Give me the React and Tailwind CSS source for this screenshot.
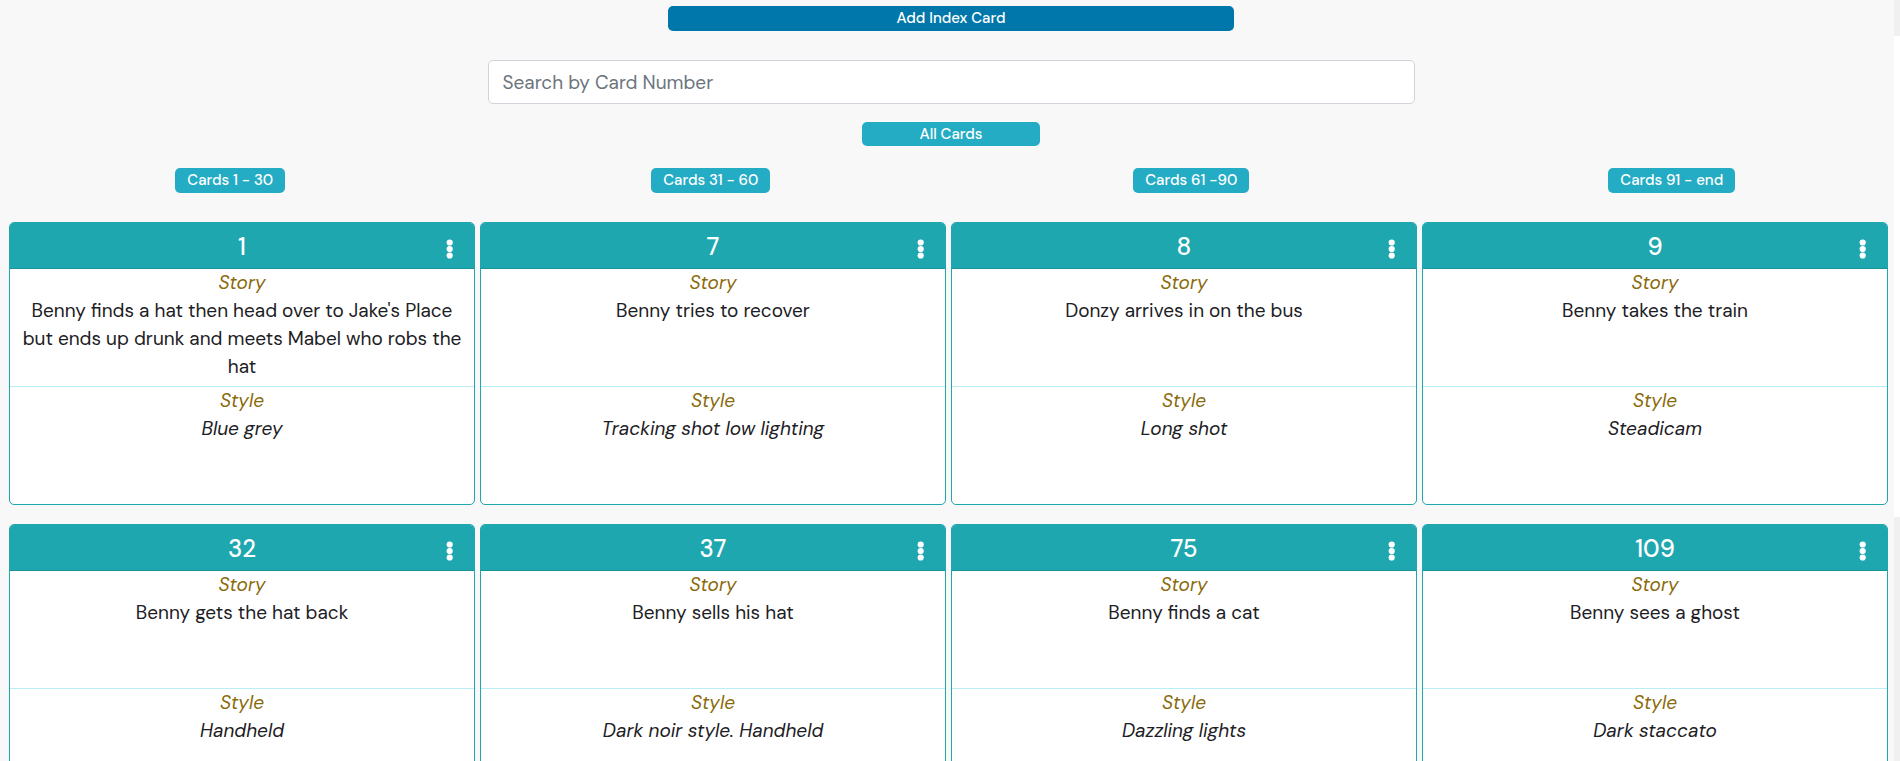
import React from "react";

const ranges = ["Cards 1 - 30", "Cards 31 - 60", "Cards 61 -90", "Cards 91 - end"];

const cards = [
  {
    number: 1,
    story: "Benny finds a hat then head over to Jake's Place but ends up drunk and meets Mabel who robs the hat",
    style: "Blue grey",
  },
  { number: 7, story: "Benny tries to recover", style: "Tracking shot low lighting" },
  { number: 8, story: "Donzy arrives in on the bus", style: "Long shot" },
  { number: 9, story: "Benny takes the train", style: "Steadicam" },
  { number: 32, story: "Benny gets the hat back", style: "Handheld" },
  { number: 37, story: "Benny sells his hat", style: "Dark noir style. Handheld" },
  { number: 75, story: "Benny finds a cat", style: "Dazzling lights" },
  { number: 109, story: "Benny sees a ghost", style: "Dark staccato" },
];

function DotsIcon() {
  return (
    <svg width="8" height="20" viewBox="0 0 8 20" fill="currentColor" aria-hidden="true">
      <circle cx="3.7" cy="3.5" r="3.1" />
      <circle cx="3.7" cy="10" r="3.1" />
      <circle cx="3.7" cy="16.5" r="3.1" />
    </svg>
  );
}

function IndexCard({ number, story, style }) {
  return (
    <article className="overflow-hidden rounded-[5px] border border-[#1fa7b0] bg-white text-center text-[19px] leading-7">
      <header className="grid h-[46px] grid-cols-[1fr_auto_1fr] items-center border-b border-[#1a929a] bg-[#1fa7b0] text-white">
        <h2 className="col-start-2 pt-0.5 text-2xl leading-7 font-medium">{number}</h2>
        <button type="button" aria-label={`Options for card ${number}`} className="mt-1.5 mr-5 justify-self-end">
          <DotsIcon />
        </button>
      </header>
      <section className="h-[118px] border-b border-[#b9eff4] px-2">
        <h3 className="text-[#8a6a0a] italic">Story</h3>
        <p>{story}</p>
      </section>
      <section className="h-[117px] px-2 italic">
        <h3 className="text-[#8a6a0a]">Style</h3>
        <p>{style}</p>
      </section>
    </article>
  );
}

export default function App() {
  return (
    <div className="flex h-screen overflow-hidden bg-[#f8f8f8] font-['DM_Sans',Lato,sans-serif] text-[#1c2024]">
      <main className="min-w-0 flex-1">
        <div className="flex flex-col items-center pt-1.5 pl-2">
          <button type="button" className="h-[25px] w-[30%] rounded-[5px] bg-[#0077aa] pb-px text-[15px] leading-6 font-medium text-white">
            Add Index Card
          </button>
          <div className="mt-[29px] flex w-1/2 px-2">
            <input
              type="text"
              aria-label="Search by Card Number"
              placeholder="Search by Card Number"
              className="h-11 w-full rounded-[5px] border border-[#ced4da] bg-white px-3.5 text-[19px] placeholder:text-[#6c757d]"
            />
          </div>
          <button type="button" className="mt-[18px] h-6 w-[178px] rounded-[5px] bg-[#24acc4] text-[15px] leading-6 font-medium text-white">
            All Cards
          </button>
        </div>
        <nav className="mt-[22px] grid grid-cols-4 gap-9 pl-2">
          {ranges.map((label) => (
            <button
              key={label}
              type="button"
              className="h-[25px] justify-self-center rounded-[5px] bg-[#24acc4] px-3 pb-px text-[15px] leading-6 font-medium text-white"
            >
              {label}
            </button>
          ))}
        </nav>
        <div className="mt-[29px] grid grid-cols-4 gap-x-[5px] gap-y-[19px] pr-1.5 pl-[9px]">
          {cards.map((card) => (
            <IndexCard key={card.number} {...card} />
          ))}
        </div>
      </main>
      <div className="flex w-1.5 flex-col" aria-hidden="true">
        <div className="h-9 bg-[#f0f0f0]" />
        <div className="h-[481px] bg-white" />
        <div className="flex-1 bg-[#f0f0f0]" />
      </div>
    </div>
  );
}
